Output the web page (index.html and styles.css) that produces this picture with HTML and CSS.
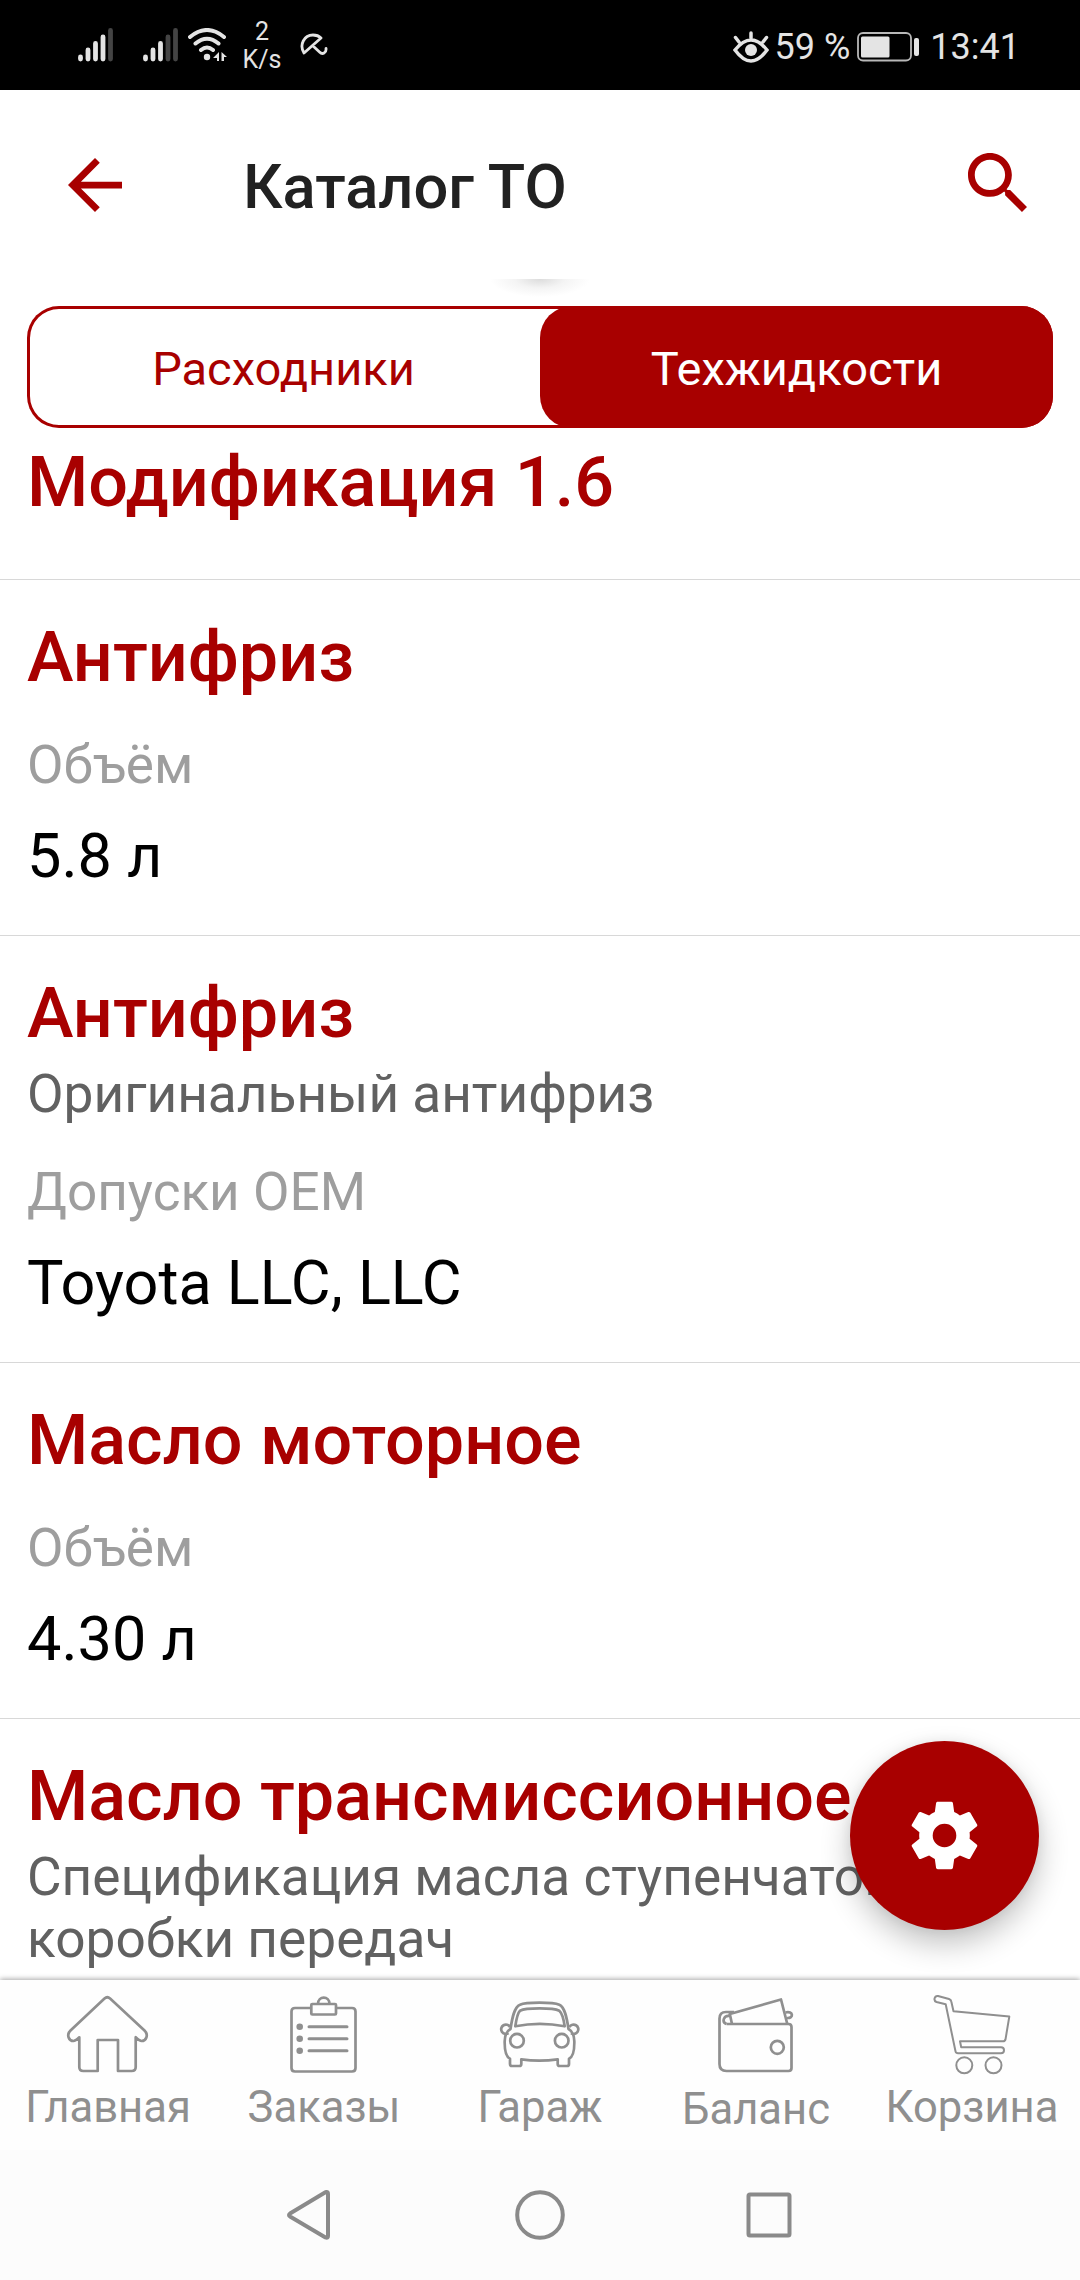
FILE: index.html
```
<!DOCTYPE html>
<html lang="ru">
<head>
    <meta charset="UTF-8">
    <meta name="viewport" content="width=device-width, initial-scale=1.0">
    <title>Каталог ТО</title>
    <link rel="stylesheet" href="styles.css">
</head>
<body>
    <div class="screen">
        <div class="status-bar">
            <div class="status-left">
                <svg class="signal" width="36" height="34" viewBox="0 0 36 34" stroke="#e4e4e4" stroke-width="4.8" stroke-linecap="round">
                    <path d="M2.5 29v2M10 22v9M17.5 15.500v15.500M25 9v22"/>
                    <path d="M32.500 2.500v28.500" stroke="#444"/>
                </svg>
                <svg class="signal" width="36" height="34" viewBox="0 0 36 34" stroke="#e4e4e4" stroke-width="4.8" stroke-linecap="round">
                    <path d="M2.5 29v2M10 22v9M17.5 15.500v15.500"/>
                    <path d="M25 9v22M32.500 2.500v28.500" stroke="#444"/>
                </svg>
                <svg class="wifi" width="40" height="34" viewBox="0 0 40 34" fill="none" stroke="#e4e4e4" stroke-width="4" stroke-linecap="round">
                    <path d="M2 9Q19 -5 36 9M7.500 15.500Q19 6 30.500 15.500M13 22Q19 17 25 22"/>
                    <circle cx="19" cy="29" r="3.200" fill="#e4e4e4" stroke="none"/>
                    <path d="M31 24v9h-2v-3h-4zM33.500 24l5.500 5h-3v4h-2.500z" fill="#e4e4e4" stroke="none"/>
                </svg>
                <div class="speed"><span>2</span><span>K/s</span></div>
                <svg class="umbrella" width="28" height="24" viewBox="0 0 28 24" fill="none" stroke="#e4e4e4" stroke-width="2.800" stroke-linecap="round" stroke-linejoin="round">
                    <path d="M4 20C-1 12 4 2 13 2q5 0 8 3zM12.500 12.500l7 6.500c3 3 7 1 6.500-3.500"/>
                </svg>
            </div>
            <div class="status-right">
                <svg class="eye" width="36" height="32" viewBox="0 0 36 32" fill="none" stroke="#e4e4e4" stroke-width="3.500" stroke-linecap="round">
                    <path d="M2 19Q18-1 34 19Q18 41 2 19zM18 7V2M6 11L2.500 6.500M30 11l3.500-4.500"/>
                    <circle cx="18" cy="19" r="6" fill="#e4e4e4" stroke="none"/>
                </svg>
                <span>59 %</span>
                <svg class="battery" width="63" height="30" viewBox="0 0 63 30">
                    <rect x="1" y="1" width="53" height="27.500" rx="5" fill="none" stroke="#b8b8b8" stroke-width="1.800"/>
                    <rect x="4" y="4.500" width="28.500" height="21" rx="1.500" fill="#e4e4e4"/>
                    <rect x="57" y="6" width="5" height="18" rx="2" fill="#e4e4e4"/>
                </svg>
                <span>13:41</span>
            </div>
        </div>

        <header class="header">
            <svg class="back" width="54" height="54" viewBox="4 4 16 16" fill="#a80000">
                <path d="M20 11H7.830l5.590-5.590L12 4l-8 8 8 8 1.410-1.410L7.830 13H20v-2z"/>
            </svg>
            <h1>Каталог ТО</h1>
            <svg class="search" width="59" height="59" viewBox="3 3 17.490 17.490" fill="#a80000">
                <path d="M15.500 14h-.790l-.280-.270C15.410 12.590 16 11.110 16 9.500 16 5.910 13.090 3 9.500 3S3 5.910 3 9.500 5.910 16 9.500 16c1.610 0 3.090-.590 4.230-1.570l.270.280v.790l5 4.990L20.490 19l-4.990-5zm-6 0C7.010 14 5 11.990 5 9.500S7.010 5 9.500 5 14 7.010 14 9.500 11.990 14 9.500 14z"/>
            </svg>
        </header>

        <main class="content">
            <div class="pull-shadow"></div>
            <div class="tabs">
                <div class="tab">Расходники</div>
                <div class="tab active">Техжидкости</div>
            </div>

            <section class="item first">
                <h2>Модификация 1.6</h2>
            </section>
            <section class="item">
                <h2>Антифриз</h2>
                <p class="label">Объём</p>
                <p class="value">5.8 л</p>
            </section>
            <section class="item">
                <h2>Антифриз</h2>
                <p class="desc">Оригинальный антифриз</p>
                <p class="label">Допуски OEM</p>
                <p class="value">Toyota LLC, LLC</p>
            </section>
            <section class="item">
                <h2>Масло моторное</h2>
                <p class="label">Объём</p>
                <p class="value">4.30 л</p>
            </section>
            <section class="item">
                <h2>Масло трансмиссионное</h2>
                <p class="desc">Спецификация масла ступенчатой коробки передач</p>
            </section>

            <div class="fab">
                <svg width="81" height="81" viewBox="0 0 24 24" fill="#fff">
                    <path d="M12 15.500A3.500 3.500 0 0 1 8.500 12 3.500 3.500 0 0 1 12 8.500a3.500 3.500 0 0 1 3.500 3.500 3.500 3.500 0 0 1-3.500 3.500m7.430-2.530c.040-.320.070-.640.070-.970s-.030-.660-.070-1l2.110-1.630c.190-.150.240-.420.120-.640l-2-3.460c-.120-.220-.390-.310-.610-.220l-2.490 1c-.520-.390-1.060-.730-1.690-.980l-.370-2.650A.506.506 0 0 0 14 2h-4c-.250 0-.460.180-.500.420l-.370 2.650c-.630.250-1.170.590-1.690.980l-2.490-1c-.220-.090-.490 0-.610.220l-2 3.460c-.130.220-.070.490.120.640L4.570 11c-.040.340-.070.670-.070 1s.030.650.070.970l-2.110 1.660c-.190.150-.250.420-.120.640l2 3.460c.120.220.390.300.610.220l2.490-1.010c.520.400 1.060.740 1.690.990l.370 2.650c.040.240.250.420.500.420h4c.250 0 .460-.180.500-.420l.370-2.650c.630-.260 1.170-.590 1.690-.990l2.490 1.010c.220.080.490 0 .610-.220l2-3.460c.120-.220.070-.490-.120-.640z"/>
                </svg>
            </div>
        </main>

        <nav class="bottom-nav">
            <div class="nav-item">
                <svg width="84" height="84" viewBox="0 0 84 84">
                    <path d="M38.500 6.500q2.800-2.500 5.600 0L78.500 38.500C83 43 80 49 75.500 49q-2 0-5.800-3.700V75q0 4-4 4H52V48H31.700v31H17.300q-4 0-4-4V45.300Q9.500 49 7.500 49C3 49 0 43 4.500 38.500z"/>
                </svg>
                <span>Главная</span>
            </div>
            <div class="nav-item">
                <svg width="84" height="84" viewBox="0 0 84 84">
                    <path d="M29 16H13q-3.500 0-3.500 3.500v56.500q0 3.500 3.500 3.500h57q3.500 0 3.500-3.500V19.500q0-3.500-3.500-3.500H54"/>
                    <rect x="29.300" y="12" width="24.700" height="10.500" rx="1"/>
                    <path d="M36 12c0-8.500 11.500-8.500 11.500 0"/>
                    <path d="M27 34.700h38M27 46.700h38M27 58.700h38" stroke-width="3" stroke-linecap="round"/>
                    <g fill="#8f8f8f" stroke="none">
                        <circle cx="17.700" cy="34.700" r="3.300"/>
                        <circle cx="17.700" cy="46.700" r="3.300"/>
                        <circle cx="17.700" cy="58.700" r="3.300"/>
                    </g>
                </svg>
                <span>Заказы</span>
            </div>
            <div class="nav-item">
                <svg width="84" height="84" viewBox="0 0 84 84">
                    <path d="M12.500 37C14 27 16 15 22 12.700 28 10 55 10 61.300 12.700 67 15 69 27 70.500 37q5.500 3 5.800 12c.2 8-1 16-5.300 17.700V72q0 2-2 2h-7.300q-2 0-2-2v-4.700q-18.500 2.500-36.400 0V72q0 2-2 2H14q-2 0-2-2v-5.300C8 65 6.500 57 6.700 49q.3-9 5.800-12z"/>
                    <path d="M17.300 34.300c1-7 2-13 4.700-15.600 6-3 33-3 39.300 0 3 2.600 4.400 8.600 5.400 15.600q-25-5-49.400 0z"/>
                    <path d="M10.500 41.200A4.700 4.700 0 1 1 12 35M73 41.200A4.700 4.700 0 1 0 71.500 35"/>
                    <circle cx="19" cy="48.700" r="6.800"/>
                    <circle cx="63.700" cy="48.700" r="6.800"/>
                </svg>
                <span>Гараж</span>
            </div>
            <div class="nav-item wallet">
                <svg width="84" height="84" viewBox="0 0 84 84">
                    <path d="M20 20h-8q-6.500 0-6.500 6.500V72q0 7 7 7h62q3 0 3-3V35q0-3-3-3h-62"/>
                    <path d="M18 32L15.800 22 67 7.500 73.300 32M12.500 32c-5-2-3-9 3.300-8"/>
                    <path d="M71.500 20.500c8-2 8.500 6 1.500 5.500"/>
                    <circle cx="63.300" cy="55.300" r="6.500"/>
                </svg>
                <span>Баланс</span>
            </div>
            <div class="nav-item cart">
                <svg width="84" height="84" viewBox="0 0 84 84">
                    <path d="M8 4l11 3q2 .6 2.300 2.500l2.200 9.700 55.800 5.400-3.800 22.700q-.4 2-2.500 2H30l1.200 6H71c4 0 4 6 0 6H28q-2 0-2.500-2L15.700 12.300 6.500 10C3 8.500 4.500 3.500 8 4z"/>
                    <circle cx="34.300" cy="73.300" r="8"/>
                    <circle cx="63.500" cy="73.300" r="8"/>
                </svg>
                <span>Корзина</span>
            </div>
        </nav>

        <div class="system-bar">
            <svg width="46" height="52" viewBox="0 0 46 52"><path d="M40.500 3q1.500 0 1.500 2v42q0 2.500-2.500 1.500L4 27.500Q2 26 4 24.500L39 3.500z"/></svg>
            <svg width="54" height="52" viewBox="0 0 54 52"><circle cx="28" cy="26" r="22.800"/></svg>
            <svg width="46" height="46" viewBox="0 0 46 46"><rect x="2.500" y="2.500" width="41" height="41" rx="1.500"/></svg>
        </div>
    </div>
</body>
</html>
```

FILE: styles.css
```
* {
    box-sizing: border-box;
}
body {
    margin: 0;
    font-family: Roboto, "Liberation Sans", sans-serif;
    background-color: #fff;
}
h1, h2, p {
    margin: 0;
    font-weight: 500;
}
svg {
    display: block;
    flex: none;
}
.screen {
    width: 1080px;
    height: 2280px;
    display: flex;
    flex-direction: column;
    overflow: hidden;
}

/* status bar */
.status-bar {
    flex: none;
    height: 90px;
    padding: 0 60px 0 78px;
    display: flex;
    justify-content: space-between;
    background-color: #000;
    color: #e4e4e4;
}
.status-left, .status-right {
    display: flex;
    align-items: center;
}
.signal {
    margin-right: 29px;
}
.signal + .signal {
    margin-right: 9px;
}
.speed {
    width: 40px;
    margin: 2px 18px 0 14px;
    display: flex;
    flex-direction: column;
    font-size: 25px;
    line-height: 28px;
    text-align: center;
}
.status-right {
    font-size: 36px;
    padding-top: 3px;
}
.eye {
    margin-right: 6px;
}
.battery {
    margin: 0 10px 0 7px;
}

/* header */
.header {
    flex: none;
    height: 189px;
    padding: 0 53px 0 68px;
    display: flex;
    align-items: center;
}
.header h1 {
    flex: 1;
    margin: 4px 0 0 121px;
    font-size: 61.4px;
    line-height: 70px;
    color: #212121;
}
.search {
    margin-bottom: 4px;
}

/* content */
.content {
    position: relative;
    flex: 1;
    min-height: 0;
    overflow: hidden;
}
.pull-shadow {
    height: 27px;
    background: radial-gradient(ellipse 50px 18px at 540px 0, #dcdcdc, #f4f4f4 50%, #fff);
}
.tabs {
    height: 122px;
    margin: 0 27px;
    display: flex;
    border-radius: 32px;
    box-shadow: inset 0 0 0 3px #a80000;
}
.tab {
    flex: 1;
    font-size: 47px;
    line-height: 126px;
    text-align: center;
    color: #a80000;
}
.tab.active {
    border-radius: 32px;
    background-color: #a80000;
    color: #fff;
}
.item {
    padding: 36px 27px 43px;
    border-bottom: 1px solid #d8d8d8;
}
.item.first {
    padding: 13px 27px 56px;
}
.item:last-of-type {
    border-bottom: none;
}
.item h2 {
    font-size: 70.1px;
    line-height: 82px;
    color: #a80000;
}
.desc {
    margin-top: 9px;
    font-size: 53.2px;
    font-weight: 400;
    line-height: 62px;
    color: #616161;
}
.label {
    margin-top: 36px;
    font-size: 53.1px;
    font-weight: 400;
    line-height: 62px;
    color: #9e9e9e;
}
.value {
    margin-top: 25px;
    font-size: 61.2px;
    font-weight: 400;
    line-height: 71px;
    color: #000;
}
.fab {
    position: absolute;
    right: 41px;
    bottom: 50px;
    width: 189px;
    height: 189px;
    display: flex;
    align-items: center;
    justify-content: center;
    border-radius: 50%;
    background-color: #a80000;
    box-shadow: 0 14px 30px rgba(0, 0, 0, 0.24), 0 0 12px rgba(0, 0, 0, 0.06);
}

/* bottom navigation */
.bottom-nav {
    flex: none;
    height: 170px;
    padding-top: 12px;
    display: flex;
    position: relative;
    background-color: #fefefe;
    box-shadow: 0 -1px 5px rgba(0, 0, 0, 0.35);
}
.nav-item {
    width: 216px;
    display: flex;
    flex-direction: column;
    align-items: center;
    font-size: 43.6px;
    line-height: 52px;
    color: #8f8f8f;
}
.nav-item svg {
    margin-bottom: 6px;
    fill: none;
    stroke: #8f8f8f;
    stroke-width: 2.7;
    stroke-linejoin: round;
}
.wallet svg {
    margin-bottom: 8px;
}
.cart svg {
    stroke-width: 2;
}

/* system navigation */
.system-bar {
    flex: none;
    height: 130px;
    padding: 0 288px 0 286px;
    display: flex;
    align-items: center;
    justify-content: space-between;
    position: relative;
    background-color: #fcfcfc;
}
.system-bar svg {
    fill: none;
    stroke: #8a8a8a;
    stroke-width: 4;
    stroke-linejoin: round;
}
```
